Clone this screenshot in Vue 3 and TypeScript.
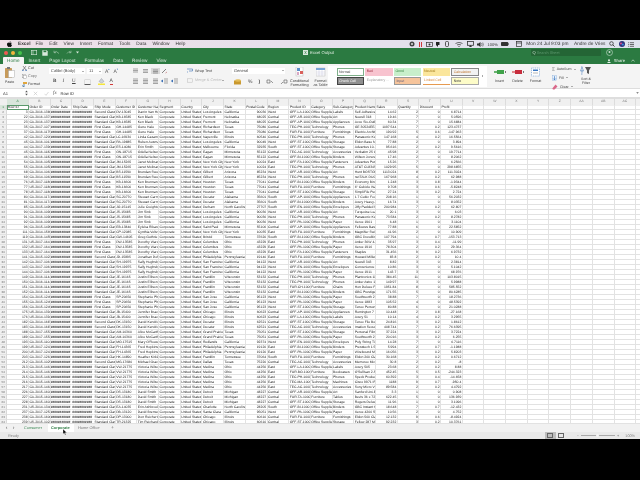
<script setup lang="ts">
const letters = 'A B C D E F G H I J K L M N O P Q R S T U V W X Y Z AA AB AC'.split(' ')
const menus = ['File', 'Edit', 'View', 'Insert', 'Format', 'Tools', 'Data', 'Window', 'Help']
const tabs = ['Insert', 'Page Layout', 'Formulas', 'Data', 'Review', 'View']
const styles = [
  { label: 'Normal', cls: 's-normal' },
  { label: 'Bad', cls: 's-bad' },
  { label: 'Good', cls: 's-good' },
  { label: 'Neutral', cls: 's-neutral' },
  { label: 'Calculation', cls: 's-calc' },
  { label: 'Check Cell', cls: 's-check' },
  { label: 'Explanatory ...', cls: 's-expl' },
  { label: 'Input', cls: 's-input' },
  { label: 'Linked Cell', cls: 's-linked' },
  { label: 'Note', cls: 's-note' },
]

// id|order|mode|cust|name|city|state|zip|region|product|category|sub|item|sales|qty|disc|profit
const raw = `3|CA-2016-138688|Second Class|DV-13045|Darrin Van Huff|Los Angeles|California|90036|West|OFF-LA-10000240|Office Supplies|Labels|Self-Adhesive|14.62|2|0|6.8714
22|CA-2016-137330|Standard Class|KB-16585|Ken Black|Fremont|Nebraska|68025|Central|OFF-AR-10000246|Office Supplies|Art|Newell 318|19.46|7|0|5.0596
23|CA-2016-137330|Standard Class|KB-16585|Ken Black|Fremont|Nebraska|68025|Central|OFF-AP-10001492|Office Supplies|Appliances|Acco Six-Outlet|60.34|7|0|15.6884
35|CA-2017-107727|First Class|GH-14485|Gene Hale|Richardson|Texas|75080|Central|TEC-PH-10004093|Technology|Phones|GE 30524EE4|1097.544|7|0.2|123.4737
37|CA-2016-117590|First Class|GH-14485|Gene Hale|Richardson|Texas|75080|Central|FUR-FU-10003664|Furniture|Furnishings|Electrix Architect|190.92|5|0.6|-147.963
42|CA-2017-120999|Standard Class|LC-16930|Linda Cazamias|Naperville|Illinois|60540|Central|TEC-PH-10004093|Technology|Phones|Panasonic Kx|147.168|4|0.2|16.5564
45|CA-2016-101343|Standard Class|RA-19885|Ruben Ausman|Los Angeles|California|90049|West|OFF-ST-10003479|Office Supplies|Storage|Eldon Base for|77.88|2|0|3.894
44|CA-2017-139619|Standard Class|ES-14080|Erin Smith|Melbourne|Florida|32935|South|OFF-ST-10003282|Office Supplies|Storage|Advantus 10-|95.616|2|0.2|9.5616
45|CA-2016-118255|First Class|ON-18715|Odella Nelson|Eagan|Minnesota|55122|Central|TEC-AC-10000171|Technology|Accessories|Verbatim 25 C|45.98|2|0|19.7714
46|CA-2016-118255|First Class|ON-18715|Odella Nelson|Eagan|Minnesota|55122|Central|OFF-BI-10003291|Office Supplies|Binders|Wilson Jones|17.46|2|0|8.2062
54|CA-2016-105816|Standard Class|JM-15265|Janet Molinari|New York City|New York|10024|East|OFF-FA-10000304|Office Supplies|Fasteners|Advantus Pus|15.26|7|0|6.2566
55|CA-2016-105816|Standard Class|JM-15265|Janet Molinari|New York City|New York|10024|East|TEC-PH-10002447|Technology|Phones|AT&T CL8345|1029.95|5|0|298.6855
68|CA-2014-106376|Standard Class|BS-11590|Brendan Sweed|Gilbert|Arizona|85234|West|OFF-AR-10002671|Office Supplies|Art|Hunt BOSTON|1113.024|8|0.2|111.3024
69|CA-2014-106376|Standard Class|BS-11590|Brendan Sweed|Gilbert|Arizona|85234|West|TEC-PH-10002726|Technology|Phones|netTALK DUO|167.968|4|0.2|62.988
76|US-2017-118038|First Class|KB-16600|Ken Brennan|Houston|Texas|77041|Central|OFF-BI-10004182|Office Supplies|Binders|Economy Bind|1.248|3|0.8|-1.9344
77|US-2017-118038|First Class|KB-16600|Ken Brennan|Houston|Texas|77041|Central|FUR-FU-10000260|Furniture|Furnishings|6" Cubicle Wal|9.708|3|0.6|-5.8248
78|US-2017-118038|First Class|KB-16600|Ken Brennan|Houston|Texas|77041|Central|OFF-ST-10000615|Office Supplies|Storage|SimpliFile Per|27.24|3|0.2|2.724
80|CA-2014-117415|Standard Class|SC-20770|Stewart Carmichael|Decatur|Alabama|35601|South|OFF-AP-10002765|Office Supplies|Appliances|1.7 Cubic Foot|208.16|1|0|56.2032
81|CA-2014-117415|Standard Class|SC-20770|Stewart Carmichael|Decatur|Alabama|35601|South|OFF-BI-10000545|Office Supplies|Binders|Avery Heavy-D|16.74|3|0|8.0352
85|CA-2015-149587|Standard Class|JO-15145|Julie Creighton|Durham|North Carolina|27707|South|OFF-EN-10002986|Office Supplies|Envelopes|Jiffy Padded M|200.984|7|0.2|62.807
90|CA-2016-109806|Standard Class|JS-15685|Jim Sink|Los Angeles|California|90036|West|OFF-AR-10001954|Office Supplies|Art|Turquoise Lea|20.1|3|0|6.03
91|CA-2016-109806|Standard Class|JS-15685|Jim Sink|Los Angeles|California|90036|West|TEC-PH-10004093|Technology|Phones|Panasonic Kx|73.584|2|0.2|8.2782
92|CA-2016-109806|Standard Class|JS-15685|Jim Sink|Los Angeles|California|90036|West|OFF-PA-10000061|Office Supplies|Paper|Xerox 1901|6.48|1|0|3.1104
96|CA-2015-149587|Standard Class|EB-13840|Eyleba Rikards|Saint Paul|Minnesota|55106|Central|OFF-AP-10002311|Office Supplies|Appliances|Fellowes Basic|77.88|6|0|22.5852
111|CA-2014-156909|Standard Class|CP-12085|Cynthia Voltz|New York City|New York|10035|East|FUR-FU-10000794|Furniture|Furnishings|Magnifier Swi|41.96|2|0|10.909
119|CA-2016-145583|Standard Class|GW-14605|Greg Guthrie|Bristol|Tennessee|37620|South|OFF-BI-10002794|Office Supplies|Binders|GBC DocuBind|107.794|1|0.7|-153.713
131|US-2017-164175|First Class|DW-13585|Dorothy Wardle|Columbus|Ohio|43229|East|TEC-PH-10001530|Technology|Phones|Anker 36W 4-|35.97|3|0.4|-11.99
132|US-2017-164175|First Class|DW-13585|Dorothy Wardle|Columbus|Ohio|43229|East|OFF-PA-10001970|Office Supplies|Paper|Xerox 1916|78.304|2|0.2|29.364
133|US-2017-164175|First Class|DW-13585|Dorothy Wardle|Columbus|Ohio|43229|East|OFF-FA-10000621|Office Supplies|Fasteners|Staples|31.456|9|0.2|6.9732
141|CA-2015-102281|Second Class|JD-15895|Jonathan Doherty|Philadelphia|Pennsylvania|19140|East|FUR-FU-10003577|Furniture|Furnishings|Howard Miller|83.8|2|0.2|10.4
142|CA-2017-106180|Standard Class|SH-19975|Sally Hughsby|San Francisco|California|94122|West|OFF-AR-10000940|Office Supplies|Art|Newell 343|8.82|3|0|2.3814
143|CA-2017-106180|Standard Class|SH-19975|Sally Hughsby|San Francisco|California|94122|West|OFF-EN-10004147|Office Supplies|Envelopes|Convenience I|10.86|3|0|5.1042
144|CA-2017-106180|Standard Class|SH-19975|Sally Hughsby|San Francisco|California|94122|West|OFF-PA-10004733|Office Supplies|Paper|Xerox 1911|143.7|3|0|68.976
149|CA-2016-114489|Standard Class|JE-16165|Justin Ellison|Franklin|Wisconsin|53132|Central|TEC-PH-10000215|Technology|Phones|Plantronics 11|384.45|11|0|103.8015
150|CA-2016-114489|Standard Class|JE-16165|Justin Ellison|Franklin|Wisconsin|53132|Central|TEC-PH-10001448|Technology|Phones|Anker Astro 1|149.97|3|0|5.9988
151|CA-2016-114489|Standard Class|JE-16165|Justin Ellison|Franklin|Wisconsin|53132|Central|FUR-CH-10000454|Furniture|Chairs|Hon Deluxe Fa|1951.84|8|0|585.552
152|CA-2016-114489|Standard Class|JE-16165|Justin Ellison|Franklin|Wisconsin|53132|Central|OFF-BI-10002735|Office Supplies|Binders|GBC Prestige|171.55|5|0|80.6285
154|CA-2015-124919|First Class|SP-20650|Stephanie Phelps|San Jose|California|95123|West|OFF-PA-10002377|Office Supplies|Paper|Southworth 2|38.88|7|0|18.2736
155|CA-2015-124919|First Class|SP-20650|Stephanie Phelps|San Jose|California|95123|West|OFF-PA-10004971|Office Supplies|Paper|Xerox 1883|105.52|4|0|48.5392
156|CA-2015-124919|First Class|SP-20650|Stephanie Phelps|San Jose|California|95123|West|OFF-ST-10001228|Office Supplies|Storage|Tenex Person|80.88|6|0|21.0288
175|US-2014-139486|Standard Class|JB-15400|Jennifer Braxton|Chicago|Illinois|60623|Central|OFF-AP-10001154|Office Supplies|Appliances|Remington 7|10.448|2|0.8|-27.168
176|US-2014-139486|Standard Class|JB-15400|Jennifer Braxton|Chicago|Illinois|60623|Central|OFF-LA-10001317|Office Supplies|Labels|Avery 51|10.14|4|0.2|3.2955
182|CA-2014-168753|Second Class|DK-13150|David Kendrick|Decatur|Illinois|62521|Central|OFF-ST-10000025|Office Supplies|Storage|Tenex File Box|24.816|3|0.2|1.8612
183|CA-2014-168753|Second Class|DK-13150|David Kendrick|Decatur|Illinois|62521|Central|TEC-AC-10004510|Technology|Accessories|Imation Secur|408.744|7|0.2|76.6395
188|CA-2017-155376|Standard Class|AM-10360|Alice McCarthy|Grand Prairie|Texas|75051|Central|OFF-ST-10002790|Office Supplies|Storage|Personal Filing|37.224|3|0.2|3.7224
189|CA-2017-155376|Standard Class|AM-10360|Alice McCarthy|Grand Prairie|Texas|75051|Central|OFF-PA-10002377|Office Supplies|Paper|Southworth 25|20.016|3|0.2|6.255
193|CA-2015-110457|Standard Class|MO-17515|Mary O'Rowe|Redlands|California|92374|West|OFF-EN-10001990|Office Supplies|Envelopes|Poly String Tie|14.28|7|0|6.7116
199|US-2017-124303|Standard Class|FH-14365|Fred Hopkins|Philadelphia|Pennsylvania|19120|East|OFF-BI-10003656|Office Supplies|Binders|Presstech 1.5|5.994|2|0.7|-1.1988
200|US-2017-124303|Standard Class|FH-14365|Fred Hopkins|Philadelphia|Pennsylvania|19120|East|OFF-PA-10002666|Office Supplies|Paper|Wirebound M|16.056|3|0.2|5.8203
203|CA-2017-126214|Standard Class|HK-14890|Heather Kirkland|Franklin|Tennessee|37064|South|FUR-FU-10001918|Furniture|Furnishings|Eldon 200 Cla|30.168|7|0.2|0.6712
212|CA-2015-102988|Second Class|MG-17680|Michael Grace|Dallas|Texas|75220|Central|TEC-AC-10001838|Technology|Accessories|Memorex Mic|30.8|2|0.2|-8
213|CA-2015-146262|Standard Class|VW-21775|Victoria Wilson|Medina|Ohio|44256|East|OFF-LA-10004544|Office Supplies|Labels|Avery 505|23.68|2|0.2|8.88
214|CA-2015-146262|Standard Class|VW-21775|Victoria Wilson|Medina|Ohio|44256|East|FUR-BO-10001337|Furniture|Bookcases|O'Sullivan 2-S|452.45|5|0.5|-244.323
215|CA-2015-146262|Standard Class|VW-21775|Victoria Wilson|Medina|Ohio|44256|East|TEC-PH-10001552|Technology|Phones|Speck Product|60.392|3|0.4|-14.658
216|CA-2015-146262|Standard Class|VW-21775|Victoria Wilson|Medina|Ohio|44256|East|TEC-MA-10000822|Technology|Machines|Cisco 9971 IP|1188|9|0.7|-950.4
217|CA-2015-146262|Standard Class|VW-21775|Victoria Wilson|Medina|Ohio|44256|East|TEC-AC-10000290|Technology|Accessories|Sony Micro V|89.584|2|0.2|4.4792
226|CA-2015-160304|Standard Class|DS-13180|David Smith|Detroit|Michigan|48227|Central|OFF-AR-10001374|Office Supplies|Art|Sanford Uni-B|3.3|1|0|0.908
227|CA-2015-160304|Standard Class|DS-13180|David Smith|Detroit|Michigan|48227|Central|FUR-TA-10001095|Furniture|Tables|Bevis 36 x 72"|622.45|5|0|136.939
228|CA-2015-160304|Standard Class|DS-13180|David Smith|Detroit|Michigan|48227|Central|OFF-ST-10000876|Office Supplies|Storage|Rogers Deluxe|11.96|1|0|3.1096
231|US-2014-134614|Standard Class|EA-14035|Erin Ashbrook|Charlotte|North Carolina|28205|South|OFF-BI-10001658|Office Supplies|Binders|GBC Instant H|18.648|7|0.7|-12.432
237|CA-2017-125318|Standard Class|DB-13120|David Bremer|Santa Clara|California|95051|West|OFF-PA-10000474|Office Supplies|Paper|Xerox 4200 Se|10.56|2|0|4.752
238|CA-2015-160045|Standard Class|DP-13000|Don Reichert|Chicago|Illinois|60610|Central|FUR-FU-10001986|Furniture|Furnishings|Eldon 500 Cla|12.132|9|0.6|-8.4924
239|US-2015-102288|Standard Class|TR-21325|Tim Reichard|Chicago|Illinois|60610|Central|OFF-ST-10001325|Office Supplies|Storage|Fellow 287 Mo|92.232|3|0.2|10.3761`

const HASHES = '###########'
type Cell = { text: string; num: boolean; hash: boolean }
const head = ['Row ID', 'Order ID', 'Order Date', 'Ship Date', 'Ship Mode', 'Customer ID', 'Customer Name', 'Segment', 'Country', 'City', 'State', 'Postal Code', 'Region', 'Product ID', 'Category', 'Sub-Category', 'Product Name', 'Sales', 'Quantity', 'Discount', 'Profit']
const numeric = new Set([0, 11, 17, 18, 19, 20])

const rows: Cell[][] = raw.split('\n').map((line) => {
  const f = line.split('|')
  const values = [f[0], f[1], HASHES, HASHES, f[2], f[3], f[4], 'Corporate', 'United States', f[5], f[6], f[7], f[8], f[9], f[10], f[11], f[12], f[13], f[14], f[15], f[16]]
  return values.map((text, i) => ({ text, num: numeric.has(i), hash: text === HASHES }))
})
const blanks = Array.from({ length: 9 }, (_, i) => i)
</script>

<template>
  <div class="screen">
    <div class="black" />

    <div class="menubar">
      <svg class="apple" width="5" height="6" viewBox="0 0 10 12"><path d="M7 0.3C7.1 1.5 6 2.8 4.9 2.7 4.8 1.5 5.9 .4 7 .3zM5 3.4c.6 0 1.3-.6 2.4-.6 .9 0 1.8 .4 2.3 1.2-2 1.2-1.6 3.8 .3 4.5-.6 1.5-1.6 3.3-2.8 3.3-.8 0-1.1-.5-2.1-.5s-1.4 .5-2.1 .5C1.6 11.8 0 9 0 6.7 0 4.3 1.5 2.9 3 2.9c.8 0 1.5 .5 2 .5z" fill="#111" /></svg>
      <b class="app-name">Excel</b>
      <span v-for="m in menus" :key="m" class="menu-item">{{ m }}</span>
      <div class="tray">
        <svg width="6" height="6" viewBox="0 0 6 6"><circle cx="3" cy="3" r="2.5" fill="#444" /><circle cx="3" cy="3" r="1" fill="#ddd" /></svg>
        <span class="pause"><i /><i /></span>
        <svg width="7" height="5" viewBox="0 0 7 5"><rect x=".5" y=".5" width="6" height="4" fill="none" stroke="#333" stroke-width=".7" /><circle cx="3.5" cy="2.5" r="1" fill="#333" /></svg>
        <svg width="5" height="5" viewBox="0 0 5 5"><path d="M0 0h3.5v3H2v2L0 3z" fill="#222" /></svg>
        <svg width="4" height="6" viewBox="0 0 4 6"><rect x=".5" y=".5" width="3" height="5" rx="1" fill="none" stroke="#333" stroke-width=".8" /></svg>
        <svg class="tray-gap" width="8" height="5" viewBox="0 0 8 5"><path d="M.5 1.5Q4-1 7.5 1.5M2 3Q4 1.5 6 3" fill="none" stroke="#333" stroke-width=".7" /><circle cx="4" cy="4.3" r=".6" fill="#333" /></svg>
        <svg width="7" height="6" viewBox="0 0 7 6"><rect x=".5" y=".5" width="6" height="3.8" fill="none" stroke="#333" stroke-width=".8" /><path d="M2 6h3L3.5 4z" fill="#333" /></svg>
        <svg width="7" height="5" viewBox="0 0 7 5"><path d="M0 1.5h1.5L3.5 0v5L1.5 3.5H0z" fill="#333" /><path d="M4.5 1q1 1.5 0 3M5.7 .5q1.3 2 0 4" fill="none" stroke="#333" stroke-width=".5" /></svg>
        <span class="tray-pct">100%</span>
        <svg width="8" height="4" viewBox="0 0 8 4"><rect width="7.2" height="4" rx=".8" fill="#333" /><rect x="7.4" y="1.2" width=".6" height="1.6" fill="#333" /></svg>
        <svg class="tray-gap" width="6" height="6" viewBox="0 0 6 6"><rect x=".4" y=".4" width="5.2" height="5.2" fill="none" stroke="#333" stroke-width=".7" /><path d="M.4 2h5.2" stroke="#333" stroke-width=".7" /></svg>
        <span class="tray-text clock">Mon 24 Jul  9:03 pm</span>
        <span class="tray-text user">Andre de Vries</span>
        <svg width="6" height="6" viewBox="0 0 6 6"><circle cx="2.5" cy="2.5" r="1.8" fill="none" stroke="#222" stroke-width=".7" /><path d="M3.8 3.8 5.6 5.6" stroke="#222" stroke-width=".8" /></svg>
        <svg class="siri" width="6" height="6" viewBox="0 0 6 6"><circle cx="3" cy="3" r="3" fill="#30337a" /><circle cx="2" cy="2.5" r="1.1" fill="#d04a8a" /><circle cx="3.8" cy="3.5" r="1.1" fill="#3a8fe0" /></svg>
        <svg width="6" height="5" viewBox="0 0 6 5"><path d="M2 .7h4M2 2.5h4M2 4.3h4" stroke="#333" stroke-width=".7" /><path d="M.2 .7h1M.2 2.5h1M.2 4.3h1" stroke="#333" stroke-width=".7" /></svg>
      </div>
    </div>

    <div class="titlebar">
      <div class="title-top">
        <span class="dot red" /><span class="dot yellow" /><span class="dot green" />
        <div class="quick">
          <svg width="6" height="5" viewBox="0 0 6 5"><rect x=".3" y=".3" width="5.4" height="4.4" fill="none" stroke="#d8e8dc" stroke-width=".6" /><path d="M2 .3v4.4" stroke="#d8e8dc" stroke-width=".6" /></svg>
          <svg width="6" height="6" viewBox="0 0 6 6"><path d="M.3 .3h4.4L5.7 1.3v4.4H.3z" fill="#d8e8dc" /><rect x="1.5" y=".6" width="2.8" height="1.6" fill="#2b7a41" /></svg>
          <svg class="dim" width="7" height="5" viewBox="0 0 7 5"><path d="M1 2.5Q3 0 6 3.5M1 .7v2h2" fill="none" stroke="#9dc4a8" stroke-width=".7" /></svg>
          <svg class="dim" width="6" height="5" viewBox="0 0 6 5"><path d="M5 2.5Q3 0 1 3.5M5 .7v2H3" fill="none" stroke="#9dc4a8" stroke-width=".7" /></svg>
          <svg width="3" height="3" viewBox="0 0 3 3"><path d="M0 .5h3L1.5 2.5z" fill="#d8e8dc" /></svg>
        </div>
        <span class="doc-title">
          <svg width="5" height="5" viewBox="0 0 5 5"><rect width="5" height="5" fill="#d8e8dc" /><path d="M1.5 1 3.5 4M3.5 1 1.5 4" stroke="#2b7a41" stroke-width=".5" /></svg>
          Excel Output
        </span>
        <div class="search"><span class="search-mark">Q</span><span>Search Sheet</span></div>
        <svg class="face" width="7" height="7" viewBox="0 0 7 7"><circle cx="3.5" cy="3.5" r="3" fill="none" stroke="#cfe2d4" stroke-width=".6" /><circle cx="3.5" cy="3" r="1" fill="#cfe2d4" /></svg>
      </div>
      <div class="title-tabs">
        <span class="tab tab-active">Home</span>
        <span v-for="t in tabs" :key="t" class="tab">{{ t }}</span>
        <span class="share">
          <svg width="5" height="4" viewBox="0 0 5 4"><circle cx="2" cy="1.2" r="1" fill="#e8f2ea" /><path d="M0 4q2-2.5 4 0z" fill="#e8f2ea" /></svg>
          Share
        </span>
        <svg class="collapse" width="4" height="3" viewBox="0 0 4 3"><path d="M.4 2.5 2 .8 3.6 2.5" fill="none" stroke="#e8f2ea" stroke-width=".6" /></svg>
      </div>
    </div>

    <div class="ribbon">
      <div class="group g-clip">
        <div class="paste">
          <svg width="10" height="11" viewBox="0 0 10 11"><rect x="0" y="1" width="7" height="10" rx=".6" fill="#c69a5a" /><rect x="2" y="0" width="3" height="2" fill="#777" /><rect x="3.5" y="3.5" width="6" height="7" fill="#fff" stroke="#999" stroke-width=".4" /></svg>
          <span>Paste</span>
        </div>
        <div class="clip-list">
          <span><svg width="5" height="5" viewBox="0 0 5 5"><path d="M1 0 4 4M4 0 1 4" stroke="#555" stroke-width=".6" /><circle cx=".9" cy="4.2" r=".7" fill="#2c62a8" /><circle cx="4.1" cy="4.2" r=".7" fill="#2c62a8" /></svg>Cut</span>
          <span class="muted"><svg width="5" height="5" viewBox="0 0 5 5"><rect x=".3" y=".3" width="3" height="3.5" fill="#fff" stroke="#888" stroke-width=".4" /><rect x="1.7" y="1.2" width="3" height="3.5" fill="#fff" stroke="#888" stroke-width=".4" /></svg>Copy</span>
          <span><svg width="5" height="5" viewBox="0 0 5 5"><rect x="1" y="0" width="4" height="2" fill="#e0a63c" /><path d="M2 2v3L0 3.5" fill="none" stroke="#3a6ea5" stroke-width=".8" /></svg>Format</span>
        </div>
      </div>

      <div class="group g-font">
        <div class="ribbon-row">
          <span class="combo font-combo">Calibri (Body)<i class="caret" /></span>
          <span class="combo size-combo">11<i class="caret" /></span>
          <span class="grow-btn">A<sup>▴</sup></span>
          <span class="grow-btn">A<sup>▾</sup></span>
        </div>
        <div class="ribbon-row format-row">
          <b class="fmt">B</b><i class="fmt">I</i><u class="fmt">U</u>
          <svg class="border-ico" width="8" height="6" viewBox="0 0 8 6"><path d="M.5 5.5h6" stroke="#333" stroke-width=".8" /><path d="M.5 1v4M6.5 1v4M.5 .5h6" stroke="#bbb" stroke-width=".4" /></svg>
          <svg width="7" height="7" viewBox="0 0 7 7"><path d="M3.5 .5 6 3.5 3.5 5 1 3.5z" fill="#cfd6dc" stroke="#667" stroke-width=".3" /><rect y="5.5" width="7" height="1.5" fill="#f5e63a" /></svg>
          <span class="font-color">A</span>
        </div>
      </div>

      <div class="group g-align">
        <div class="align-cols">
          <div class="ribbon-row align-row">
            <svg v-for="n in 3" :key="n" :class="{ pressed: n === 3 }" class="al" width="9" height="6" viewBox="0 0 9 6"><path :d="n === 1 ? 'M2 1h5M2 2.5h5M2 4h5' : n === 2 ? 'M2 1.5h5M2 3h5M2 4.5h5' : 'M2 2h5M2 3.5h5M2 5h5'" stroke="#555" stroke-width=".5" /></svg>
            <svg class="al" width="9" height="6" viewBox="0 0 9 6"><path d="M2 5 6 1" stroke="#666" stroke-width=".8" /><path d="M5.5 5 7 4" stroke="#b55" stroke-width=".6" /></svg>
          </div>
          <div class="ribbon-row align-row second">
            <svg v-for="n in 3" :key="n" class="al" width="9" height="6" viewBox="0 0 9 6"><path d="M2 1h5M2 2.5h5M2 4h5M2 5.5h5" stroke="#555" stroke-width=".5" /></svg>
            <svg v-for="n in 2" :key="'in' + n" class="al" width="9" height="6" viewBox="0 0 9 6"><path d="M4 1h4M4 3h4M4 5h4" stroke="#555" stroke-width=".5" /><path d="M.8 3 3 1.5v3z" fill="#3b70b5" /></svg>
          </div>
        </div>
        <div class="wrap-col">
          <span class="wrap-line"><svg width="6" height="5" viewBox="0 0 6 5"><path d="M0 1h5.5v2H2M0 4h1" fill="none" stroke="#3b70b5" stroke-width=".6" /></svg>Wrap Text</span>
          <span class="wrap-line dis"><svg width="6" height="5" viewBox="0 0 6 5"><rect x=".3" y=".8" width="5.4" height="3.4" fill="none" stroke="#bbb" stroke-width=".5" /></svg>Merge &amp; Center<i class="caret" /></span>
        </div>
      </div>

      <div class="group g-number">
        <span class="combo number-combo">General<i class="caret" /></span>
        <div class="ribbon-row number-row">
          <svg width="8" height="6" viewBox="0 0 8 6"><rect y="1.5" width="7" height="4" fill="#c9982e" /><ellipse cx="4" cy="1.5" rx="3" ry="1.2" fill="#e3bc57" /></svg>
          <span class="num-btn">%</span><span class="num-btn bold">)</span>
          <svg width="8" height="6" viewBox="0 0 8 6"><path d="M1 1h3v3H1zM5 2l2 2" fill="none" stroke="#555" stroke-width=".6" /></svg>
          <svg width="8" height="6" viewBox="0 0 8 6"><path d="M4 1h3v3H4zM3 3 1 5" fill="none" stroke="#555" stroke-width=".6" /></svg>
        </div>
      </div>

      <div class="group g-cond">
        <div class="big">
          <svg width="10" height="10" viewBox="0 0 10 10"><rect x="1" y="0" width="7" height="9" fill="#fff" stroke="#aaa" stroke-width=".4" /><rect x="2" y="1" width="3" height="3" fill="#5d8fca" /><rect x="5" y="4" width="3" height="3" fill="#d9605b" /><rect x="2" y="5" width="2" height="3" fill="#d9a8c4" /></svg>
          <span>Conditional<br>Formatting</span>
        </div>
        <div class="big">
          <svg width="10" height="10" viewBox="0 0 10 10"><rect x="0" y="1" width="9" height="8" fill="#fff" stroke="#aaa" stroke-width=".4" /><rect x="0" y="1" width="9" height="2" fill="#7ba5d6" /><path d="M0 5h9M0 7h9M3 3v6M6 3v6" stroke="#aac" stroke-width=".3" /></svg>
          <span>Format<br>as Table</span>
        </div>
      </div>

      <div class="group g-styles">
        <div class="gallery">
          <span v-for="s in styles" :key="s.label" class="style-cell" :class="s.cls">{{ s.label }}</span>
        </div>
        <i class="gallery-arrow" />
      </div>

      <div class="group g-cells">
        <div v-for="c in ['Insert', 'Delete', 'Format']" :key="c" class="cell-btn">
          <svg v-if="c === 'Insert'" width="12" height="6" viewBox="0 0 12 6"><rect x="0" y="2" width="3" height="2" fill="#69b26f" /><rect x="3" y="1" width="7" height="4" fill="#3fa24a" /><path d="M11 2h1v2h-1z" fill="#777" /></svg>
          <svg v-else-if="c === 'Delete'" width="12" height="6" viewBox="0 0 12 6"><rect x="0" y="2" width="3" height="2" fill="#e08a8d" /><rect x="3" y="1" width="7" height="4" fill="#c72c3c" /><path d="M11 2h1v2h-1z" fill="#777" /></svg>
          <svg v-else width="10" height="10" viewBox="0 0 10 10"><rect x=".5" y="1" width="8" height="8" fill="#fff" stroke="#3b78c2" stroke-width=".5" stroke-dasharray="1 .8" /><rect x="2" y="2.5" width="5" height="1.5" fill="#3b78c2" /><path d="M2 6h5" stroke="#888" stroke-width=".6" /></svg>
          <span>{{ c }}</span>
        </div>
      </div>

      <div class="group g-edit">
        <span><svg width="5" height="6" viewBox="0 0 5 6"><path d="M4.5 1V.4H.6L2.8 3 .6 5.6h3.9V5" fill="none" stroke="#555" stroke-width=".7" /></svg>AutoSum<i class="caret" /></span>
        <span><svg width="5" height="6" viewBox="0 0 5 6"><rect x=".3" y=".5" width="4.4" height="5" fill="#e7f0fa" stroke="#6b9bd4" stroke-width=".3" /><path d="M2.5 1.2v3.6M1.2 3.5 2.5 4.9 3.8 3.5" fill="none" stroke="#2566b5" stroke-width=".6" /></svg>Fill<i class="caret" /></span>
        <span><svg width="6" height="6" viewBox="0 0 6 6"><path d="M3.5 .5 5.5 2.5 2.5 5.5H1L.3 4.5z" fill="#d9688a" /></svg>Clear<i class="caret" /></span>
      </div>

      <div class="group g-sort">
        <svg width="12" height="9" viewBox="0 0 12 9"><path d="M1 0h1.5M1 8h1.5" stroke="#3b70b5" stroke-width=".6" /><path d="M2 1 .5 5h3zM2 7V4" fill="none" stroke="#3b70b5" stroke-width=".5" /><path d="M5 1h6L9 4.5V8L7 7V4.5z" fill="#555" /></svg>
        <span>Sort &amp;<br>Filter</span>
      </div>
    </div>

    <div class="formula">
      <span class="namebox">A1<svg width="3" height="6" viewBox="0 0 3 6"><path d="M.2 2.2 1.5 .6 2.8 2.2zM.2 3.8 1.5 5.4 2.8 3.8z" fill="#555" /></svg></span>
      <svg class="fx-mark" width="5" height="5" viewBox="0 0 5 5"><path d="M.8 .8 4.2 4.2M4.2 .8 .8 4.2" stroke="#c4c4c4" stroke-width=".6" /></svg>
      <svg class="fx-mark" width="5" height="5" viewBox="0 0 5 5"><path d="M.5 2.8 2 4.3 4.5 1" fill="none" stroke="#c4c4c4" stroke-width=".6" /></svg>
      <i class="fx-label">fx</i>
      <span class="formula-text">Row ID</span>
      <svg class="formula-drop" width="3" height="2" viewBox="0 0 3 2"><path d="M.2 .2 1.5 1.8 2.8 .2z" fill="#666" /></svg>
    </div>

    <div class="sheet">
      <div class="sheet-gap" />
      <div class="row col-row">
        <div class="corner" />
        <div v-for="(l, i) in letters" :key="l" class="col-head" :class="{ 'col-on': i === 0 }">{{ l }}</div>
        <div class="col-head" />
      </div>
      <div class="row">
        <div class="row-head row-on">1</div>
        <div v-for="(h, i) in head" :key="h" class="cell" :class="{ selected: i === 0 }">{{ h }}</div>
        <div v-for="b in blanks" :key="b" class="cell" />
      </div>
      <div v-for="(r, ri) in rows" :key="ri" class="row">
        <div class="row-head">{{ ri + 2 }}</div>
        <div v-for="(c, ci) in r" :key="ci" class="cell" :class="{ num: c.num, hash: c.hash }">{{ c.text }}</div>
        <div v-for="b in blanks" :key="b" class="cell" />
      </div>
    </div>

    <div class="sheetbar">
      <span class="nav">‹</span><span class="nav">›</span>
      <span class="sheet-tab first">Consumer</span>
      <span class="sheet-tab current">Corporate</span>
      <span class="sheet-tab plain">Home Office</span>
      <span class="plus">+</span>
      <svg class="pointer" width="4" height="6" viewBox="0 0 4 6"><path d="M0 0v5l1.2-1 .9 2 .8-.4-.9-1.9H3.8z" fill="#111" stroke="#fff" stroke-width=".3" /></svg>
    </div>

    <div class="status">
      <span class="ready">Ready</span>
      <span class="view-btn view-on"><i /></span>
      <span class="view-btn"><i /></span>
      <span class="zoom-minus">−</span>
      <span class="slider"><i /></span>
      <span class="zoom-plus">+</span>
      <span class="zoom-val">100%</span>
    </div>
    <div class="black fill" />
  </div>
</template>

<style>
html, body { margin: 0; background: #000; }
</style>

<style scoped>
.screen {
  width: 640px;
  height: 480px;
  display: flex;
  flex-direction: column;
  overflow: hidden;
  background: #000;
  font-family: "Liberation Sans", Arial, sans-serif;
  text-rendering: geometricPrecision;
  color: #444;
  filter: blur(0.3px);
}
.black { height: 40px; flex: none; background: #000; }
.black.fill { flex: 1; }

.menubar {
  height: 8px;
  flex: none;
  display: flex;
  align-items: center;
  padding-left: 7px;
  box-sizing: border-box;
  font-size: 4.8px;
  color: #333;
  background: linear-gradient(90deg, #efdfe7, #e6e0ec 50%, #dfe2ee);
}
.apple { margin-right: 6px; }
.app-name { margin-right: 5px; font-size: 4.8px; }
.menu-item { margin-right: 6px; }
.tray { margin-left: auto; display: flex; align-items: center; gap: 3.5px; padding-right: 6px; }
.pause { display: flex; gap: 1px; }
.pause i { width: 1.2px; height: 5px; background: #d03a3a; }
.tray-gap { margin-left: 3px; }
.tray-text { font-size: 4.8px; white-space: pre; }
.tray-pct { font-size: 4px; }
.clock { margin-left: 1px; }
.user { margin-left: 2px; }

.titlebar { height: 16px; flex: none; background: #2b7a41; display: flex; flex-direction: column; }
.title-top { height: 9px; display: flex; align-items: center; padding: 0 2px 0 4px; color: #dcebdf; font-size: 4.2px; position: relative; }
.dot { width: 4px; height: 4px; border-radius: 50%; margin-right: 3px; }
.red { background: #ee5a52; }
.yellow { background: #f3b53d; }
.green { background: #45c24c; }
.quick { display: flex; align-items: center; gap: 4.5px; margin-left: 6px; }
.dim { margin-left: 1px; }
.doc-title { margin-left: 224px; display: flex; align-items: center; gap: 2px; width: 228px; }
.search { width: 70px; height: 6.5px; background: #246535; border-radius: 1px; display: flex; align-items: center; gap: 1px; padding-left: 1.5px; box-sizing: border-box; color: #5f9a71; font-size: 3.8px; }
.search-mark { color: #d6e6da; font-size: 4px; }
.face { margin-left: 5px; }
.title-tabs { height: 7px; display: flex; align-items: flex-end; font-size: 4.7px; color: #d9e9dd; padding-left: 3px; }
.tab { height: 7px; line-height: 7px; padding: 0 4.5px; }
.tab-active { background: #f4f4f4; color: #2b7a41; border-radius: 1px 1px 0 0; padding: 0 4px; margin-right: .5px; }
.share { margin-left: auto; height: 7px; display: flex; align-items: center; gap: 2px; color: #eef5f0; font-size: 4.2px; }
.collapse { margin: 0 5px 2px 6px; }

.ribbon { height: 24px; flex: none; background: #f4f4f4; display: flex; font-size: 3.6px; color: #444; }
.group { flex: none; box-sizing: border-box; height: 100%; }
.g-clip { width: 46px; display: flex; padding: 3px 0 0 5px; }
.paste { width: 15px; display: flex; flex-direction: column; gap: 1.5px; }
.clip-list { display: flex; flex-direction: column; gap: 3px; margin-top: -1.5px; padding-left: 1.5px; font-size: 3.8px; }
.clip-list span { display: flex; align-items: center; gap: 1.5px; }
.muted { color: #777; }
.g-font { width: 81px; padding: 4px 0 0 3px; }
.ribbon-row { display: flex; align-items: center; }
.combo { position: relative; display: block; box-sizing: border-box; height: 6px; line-height: 6px; background: #fff; padding-left: 2px; font-size: 4px; color: #444; }
.font-combo { width: 36px; margin-right: 2px; }
.size-combo { width: 15px; margin-right: 3px; }
.caret { position: absolute; right: 1.5px; top: 2.2px; width: 0; height: 0; border: 1px solid transparent; border-top: 1.3px solid #666; border-bottom: 0; }
.grow-btn { font-size: 5px; width: 8.5px; color: #555; }
.grow-btn sup { font-size: 2.5px; color: #3b70b5; }
.format-row { margin-top: 3.5px; padding-left: 4px; color: #444; height: 7px; }
.fmt { font-size: 5px; width: 9.5px; font-family: "Liberation Serif", serif; }
.border-ico { margin: 0 6px 0 2px; }
.font-color { font-size: 5px; margin-left: 5px; border-bottom: 1.3px solid #d23b3b; line-height: 5px; }
.g-align { width: 102px; display: flex; padding: 3px 0 0 4px; }
.align-cols { width: 50px; }
.al { margin-right: .8px; padding: 0; }
.pressed { background: #d8d8d8; }
.align-row { height: 7px; }
.second { margin-top: 3px; }
.wrap-col { display: flex; flex-direction: column; gap: 4.5px; padding: 1px 0 0 6px; }
.wrap-line { position: relative; display: flex; align-items: center; gap: 2px; font-size: 3.8px; padding-right: 4px; }
.dis { color: #bbb; }
.g-number { width: 59px; padding: 4px 0 0 3px; }
.number-combo { width: 53px; }
.number-row { gap: 6px; margin-top: 4.5px; padding-left: 2px; }
.num-btn { font-size: 5px; }
.bold { font-weight: 700; }
.g-cond { width: 40px; display: flex; padding: 2px 0 0 2px; gap: 4px; }
.big { width: 20px; display: flex; flex-direction: column; align-items: center; gap: 1.5px; font-size: 3.8px; line-height: 4.4px; text-align: center; white-space: nowrap; padding-top: 1px; }
.g-styles { width: 159px; display: flex; background: #fff; height: 21px; margin-top: 1.5px; padding: 2.5px 0 0 8.5px; position: relative; }
.gallery { display: grid; grid-template-columns: repeat(5, 27.5px); grid-auto-rows: 7.5px; column-gap: 1.2px; row-gap: 1.5px; }
.gallery-arrow { position: absolute; right: 3px; top: 9px; width: 0; height: 0; border: 1.3px solid transparent; border-left: 1.8px solid #555; }
.style-cell { font-size: 3.5px; line-height: 7.5px; padding-left: 1.5px; box-sizing: border-box; white-space: nowrap; overflow: hidden; color: #444; }
.s-normal { background: #fff; border: .5px solid #7eb08a; line-height: 6.5px; }
.s-bad { background: #f8c3cf; color: #a5394a; }
.s-good { background: #c8efcb; color: #3d8a48; }
.s-neutral { background: #fbe69c; color: #a07a1c; }
.s-calc { background: #f2f2f2; color: #c0752d; border: .5px solid #888; line-height: 6.5px; }
.s-check { background: #8f8f8f; color: #fff; border: .6px solid #444; line-height: 6.3px; }
.s-expl { color: #999; }
.s-input { background: #f6c49b; color: #5a5a7a; border: .3px solid #999; }
.s-linked { color: #d6873a; border-bottom: .6px solid #e69a50; }
.s-note { background: #fdfcc8; border: .4px solid #aaa; line-height: 6.7px; }
.g-cells { width: 61px; display: flex; padding: 3px 0 0 6px; gap: 5px; }
.cell-btn { width: 13px; display: flex; flex-direction: column; align-items: center; justify-content: flex-end; height: 16px; gap: 4px; }
.cell-btn:last-child svg { margin-bottom: -2px; }
.g-edit { width: 28px; display: flex; flex-direction: column; gap: 2.8px; padding: 2px 0 0 4px; font-size: 3.6px; }
.g-edit span { position: relative; display: flex; align-items: center; gap: 2px; }
.g-edit .caret { position: static; margin-left: .5px; }
.g-sort { width: 20px; display: flex; flex-direction: column; align-items: center; gap: 2px; padding-top: 2px; text-align: center; line-height: 4px; }

.formula { height: 9px; flex: none; background: #fff; display: flex; align-items: center; font-size: 4.1px; color: #333; box-sizing: border-box; border-top: .5px solid #ddd; }
.namebox { width: 29px; box-sizing: border-box; padding: 0 1.5px 0 3px; display: flex; justify-content: space-between; align-items: center; }
.fx-mark { margin-left: 4px; margin-right: 1.5px; }
.fx-label { margin-left: 3px; font-family: "Liberation Serif", serif; color: #555; font-size: 5px; }
.formula-text { margin-left: 4px; }
.formula-drop { margin-left: auto; margin-right: 1.5px; }

.sheet { height: 326px; flex: none; overflow: hidden; background: #fff; font-size: 3.4px; color: #222; position: relative; }
.sheet-gap { height: 2px; background: #dedede; }
.row { display: grid; grid-template-columns: 7.3px repeat(30, 21.7px); height: 5px; }
.col-row { height: 5.7px; background: #f0f0f0; }
.corner, .col-head, .row-head { background: #f0f0f0; }
.col-head { text-align: center; line-height: 5.7px; border-right: 1px solid #dcdcdc; color: #777; }
.col-on { background: #d9e6dc; color: #2b7a41; border-bottom: 1px solid #5a9a6c; }
.row-head { text-align: center; line-height: 5px; border-right: 1px solid #d8d8d8; border-bottom: 1px solid #e2e2e2; color: #777; overflow: hidden; font-size: 3px; }
.row-on { background: #d9e6dc; color: #2b7a41; }
.cell { overflow: hidden; white-space: nowrap; line-height: 5px; padding: 0 .4px; box-sizing: border-box; border-right: 1px solid #e2e2e2; border-bottom: 1px solid #e2e2e2; }
.num { text-align: right; }
.hash { font-weight: 700; color: #111; padding: 0; border-right-color: transparent; letter-spacing: -.1px; }
.selected { outline: 1px solid #5a9a6c; outline-offset: -1px; position: relative; }

.sheetbar { height: 9px; flex: none; background: #f1f1f1; display: flex; align-items: center; position: relative; font-size: 3.9px; color: #777; border-top: 1px solid #e2e2e2; box-sizing: border-box; }
.nav { width: 7px; text-align: center; font-size: 5px; color: #555; }
.nav:first-child { margin-left: 3px; }
.sheet-tab { height: 100%; line-height: 8px; }
.first { margin-left: 7px; width: 24px; color: #3f8a58; }
.current { width: 23px; padding-left: 3px; background: #fff; color: #2b7a41; font-weight: 700; }
.plain { margin-left: 4px; width: 28px; }
.plus { margin-left: 5px; font-size: 5px; }
.pointer { position: absolute; left: 63px; top: 5px; }

.status { height: 7px; flex: none; background: #e9e9e9; display: flex; align-items: center; font-size: 3.8px; color: #888; box-sizing: border-box; }
.ready { margin-left: 8px; margin-right: auto; }
.view-btn { width: 11px; height: 100%; display: flex; align-items: center; justify-content: center; }
.view-btn i { width: 4px; height: 3px; border: .5px solid #666; }
.view-on { background: #bdbdbd; }
.zoom-minus { margin-left: 10px; }
.slider { width: 34px; height: 1px; margin: 0 2px; background: #aaa; position: relative; }
.slider i { position: absolute; left: 15px; top: -1.2px; width: 3px; height: 3.5px; border-radius: 50%; background: #f5f5f5; }
.zoom-val { margin: 0 5px 0 6px; }
</style>
